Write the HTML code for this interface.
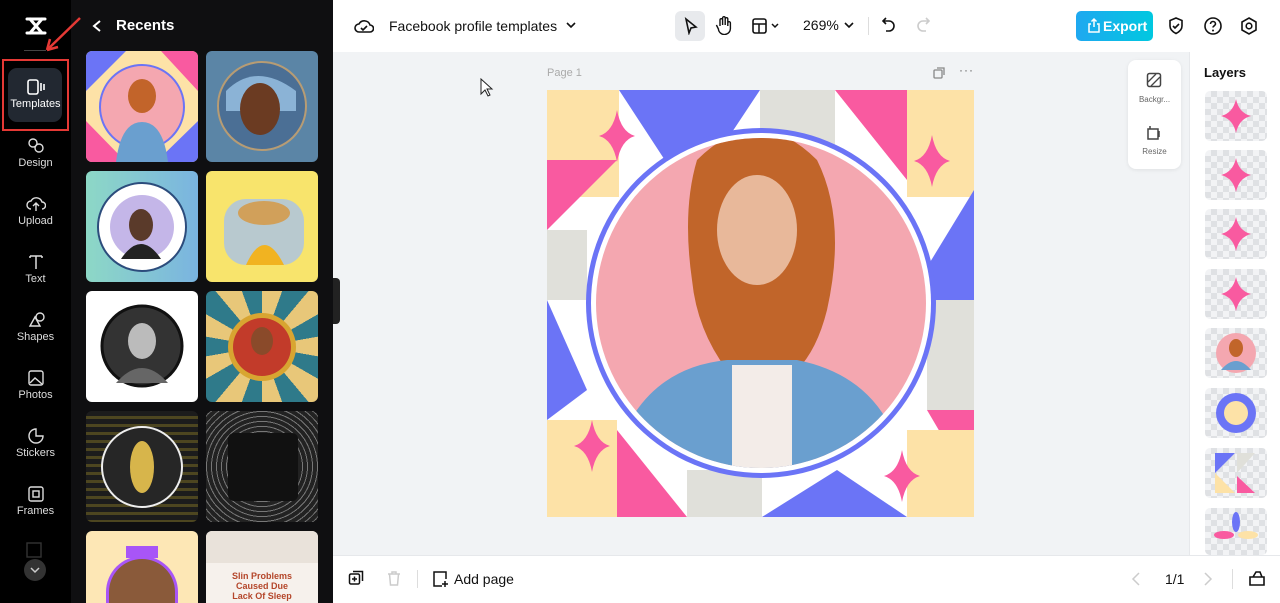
<!DOCTYPE html>
<html><head><meta charset="utf-8"><style>
*{margin:0;padding:0;box-sizing:border-box}
html,body{width:1280px;height:603px;overflow:hidden}
body{font-family:"Liberation Sans",sans-serif;background:#f1f3f5;position:relative}
.rail{position:absolute;left:0;top:0;width:71px;height:603px;background:#000}
.panel{position:absolute;left:71px;top:0;width:262px;height:603px;background:#0f0f11;overflow:hidden}
.ri{position:absolute;left:0;width:71px;text-align:center;color:#ddd;font-size:11px}
.ri svg{display:block;margin:0 auto 3px}
.th{position:absolute;width:112px;height:111px;border-radius:6px;overflow:hidden}
.top{position:absolute;left:333px;top:0;right:0;height:52px;background:#fff}
.bot{position:absolute;left:333px;top:555px;right:0;height:48px;background:#fff;border-top:1px solid #e6e8eb}
.layers{position:absolute;left:1189px;top:52px;width:91px;height:503px;background:#fff;border-left:1px solid #e6e8eb;overflow:hidden}
.lt{position:absolute;left:15px;width:62px;height:50px;border-radius:5px;background:#eceef1 repeating-conic-gradient(#dfe1e4 0 25%,#f2f3f5 0 50%) 0 0/12px 12px;overflow:hidden}
</style></head><body>
<div class="rail">
 <svg style="position:absolute;left:24px;top:15px" width="24" height="22" viewBox="0 0 24 22"><path d="M3 4h18M3 18h18M6 4l12 14M18 4L6 18" stroke="#fff" stroke-width="3" fill="none" stroke-linecap="round"/></svg>
 <div style="position:absolute;left:24px;top:50px;width:22px;height:1px;background:#444"></div>
 <div style="position:absolute;left:2px;top:59px;width:67px;height:72px;border:2px solid #e53935"></div>
 <div style="position:absolute;left:8px;top:68px;width:54px;height:54px;border-radius:9px;background:#222831"></div>
 <div class="ri" style="top:79px;color:#fff"><svg width="18" height="16" viewBox="0 0 18 16"><rect x="1" y="1" width="10" height="14" rx="2" stroke="#fff" stroke-width="1.6" fill="none"/><path d="M14 4v8M17 5v6" stroke="#fff" stroke-width="1.6"/></svg>Templates</div>
 <div class="ri" style="top:137px"><svg width="18" height="17"><circle cx="6" cy="6" r="4" stroke="#ddd" stroke-width="1.4" fill="none"/><circle cx="12" cy="11" r="4" stroke="#ddd" stroke-width="1.4" fill="none"/></svg>Design</div>
 <div class="ri" style="top:195px"><svg width="20" height="17"><path d="M5 14a4 4 0 010-8 6 6 0 0111 1 3.5 3.5 0 010 7M10 16V8M7 11l3-3 3 3" stroke="#ddd" stroke-width="1.4" fill="none"/></svg>Upload</div>
 <div class="ri" style="top:253px"><svg width="18" height="17"><path d="M3 3h12M9 3v13M3 3v2M15 3v2" stroke="#ddd" stroke-width="1.5" fill="none"/></svg>Text</div>
 <div class="ri" style="top:311px"><svg width="18" height="17"><path d="M3 15l5-9 5 9zM9 6a4 4 0 118 0 4 4 0 01-8 0" stroke="#ddd" stroke-width="1.4" fill="none"/></svg>Shapes</div>
 <div class="ri" style="top:369px"><svg width="18" height="17"><rect x="2" y="2" width="14" height="14" rx="2" stroke="#ddd" stroke-width="1.4" fill="none"/><path d="M3 14l5-5 7 6" stroke="#ddd" stroke-width="1.4" fill="none"/></svg>Photos</div>
 <div class="ri" style="top:427px"><svg width="18" height="17"><path d="M9 2a7 7 0 107 7H9z" stroke="#ddd" stroke-width="1.4" fill="none"/></svg>Stickers</div>
 <div class="ri" style="top:485px"><svg width="18" height="17"><rect x="2" y="2" width="14" height="14" rx="2" stroke="#ddd" stroke-width="1.4" fill="none"/><rect x="6" y="6" width="6" height="6" stroke="#ddd" stroke-width="1.4" fill="none"/></svg>Frames</div>
 <svg style="position:absolute;left:25px;top:541px" width="20" height="18"><rect x="2" y="2" width="14" height="14" stroke="#333" stroke-width="1.4" fill="none"/></svg>
 <div style="position:absolute;left:24px;top:559px;width:22px;height:22px;border-radius:50%;background:#333"><svg width="22" height="22"><path d="M7 9l4 4 4-4" stroke="#ccc" stroke-width="1.5" fill="none"/></svg></div>
</div>
<div class="panel">
 <svg style="position:absolute;left:20px;top:19px" width="12" height="14"><path d="M9 2L3 7l6 5" stroke="#fff" stroke-width="2" fill="none"/></svg>
 <div style="position:absolute;left:45px;top:17px;color:#fff;font-weight:bold;font-size:15px">Recents</div>
 <div class="th" style="left:15px;top:51px;background:#fde2a7"><svg width="112" height="111"><polygon points="0,0 40,0 0,40" fill="#6b74f6"/><polygon points="112,111 70,111 112,70" fill="#6b74f6"/><polygon points="0,70 0,111 40,111" fill="#f95aa0"/><polygon points="112,0 112,40 75,0" fill="#f95aa0"/><circle cx="56" cy="56" r="42" fill="#f4a7b0" stroke="#6b74f6" stroke-width="2"/><ellipse cx="56" cy="45" rx="14" ry="17" fill="#c2642a"/><path d="M30 111q5-40 26-40t26 40z" fill="#6a9fcf"/></svg></div>
 <div class="th" style="left:135px;top:51px;background:#5b85a6"><svg width="112" height="111"><circle cx="56" cy="55" r="44" fill="#4b6f95" stroke="#b79c74" stroke-width="2"/><path d="M20 40q30-30 70 0v20H20z" fill="#8bb3d6"/><ellipse cx="54" cy="58" rx="20" ry="26" fill="#6b3b22"/></svg></div>
 <div class="th" style="left:15px;top:171px;background:linear-gradient(90deg,#8dd8c6,#7ab4e0)"><svg width="112" height="111"><circle cx="56" cy="56" r="44" fill="#fff" stroke="#2c4c7c" stroke-width="2"/><circle cx="56" cy="56" r="32" fill="#c4b6e8"/><ellipse cx="55" cy="54" rx="12" ry="16" fill="#5a3a2a"/><path d="M35 88q20-30 40 0z" fill="#222"/></svg></div>
 <div class="th" style="left:135px;top:171px;background:#f8e46c"><svg width="112" height="111"><rect x="18" y="28" width="80" height="66" rx="22" fill="#b8c9cf"/><ellipse cx="58" cy="42" rx="26" ry="12" fill="#d1a05a"/><path d="M40 94q18-40 38 0z" fill="#f1b321"/></svg></div>
 <div class="th" style="left:15px;top:291px;background:#fff"><svg width="112" height="111"><circle cx="56" cy="55" r="40" fill="#333" stroke="#111" stroke-width="3"/><ellipse cx="56" cy="50" rx="14" ry="18" fill="#bbb"/><path d="M30 92q26-30 52 0z" fill="#666"/></svg></div>
 <div class="th" style="left:135px;top:291px;background:repeating-conic-gradient(from 0deg at 50% 50%,#e8c779 0 20deg,#2f7a8a 20deg 40deg)"><svg width="112" height="111"><circle cx="56" cy="56" r="34" fill="#d8a531"/><circle cx="56" cy="56" r="29" fill="#c23b2a"/><ellipse cx="56" cy="50" rx="11" ry="14" fill="#8a4a2a"/></svg></div>
 <div class="th" style="left:15px;top:411px;background:repeating-linear-gradient(180deg,#1c1c1c 0 5px,#4d4620 5px 8px)"><svg width="112" height="111"><circle cx="56" cy="56" r="40" fill="#262626" stroke="#eee" stroke-width="2"/><ellipse cx="56" cy="56" rx="12" ry="26" fill="#d7b54b"/></svg></div>
 <div class="th" style="left:135px;top:411px;background:repeating-radial-gradient(#777 0 1px,#222 1px 5px)"><div style="position:absolute;left:22px;top:22px;width:70px;height:68px;background:#111;border-radius:6px"></div></div>
 <div class="th" style="left:15px;top:531px;height:72px;border-radius:6px 6px 0 0;background:#fde7b5"><div style="position:absolute;left:20px;top:25px;width:72px;height:47px;border-radius:36px 36px 0 0;border:3px solid #a855f7;border-bottom:none;background:#8a5a3a"></div><div style="position:absolute;left:40px;top:15px;width:32px;height:12px;background:#a855f7"></div></div>
 <div class="th" style="left:135px;top:531px;height:72px;border-radius:6px 6px 0 0;background:#f6f1ec"><div style="position:absolute;left:0;top:0;width:112px;height:32px;background:#e9e2da"></div><div style="position:absolute;left:0;top:40px;width:112px;text-align:center;color:#b4462a;font-size:9px;font-weight:bold;line-height:10px">Slin Problems<br>Caused Due<br>Lack Of Sleep</div></div>
</div>
<svg style="position:absolute;left:25px;top:12px;z-index:5" width="60" height="50"><path d="M55 6L22 38M22 38l3-11M22 38l11-3" stroke="#e53935" stroke-width="2.5" fill="none"/></svg>
<div style="position:absolute;left:333px;top:278px;width:7px;height:46px;background:#222;border-radius:0 4px 4px 0"></div>
<div class="top">
 <svg style="position:absolute;left:21px;top:17px" width="20" height="18"><path d="M5 15a4 4 0 010-8 6 6 0 0111 1 3.5 3.5 0 010 7z M7 11l2 2 4-4" stroke="#111" stroke-width="1.6" fill="none"/></svg>
 <div style="position:absolute;left:56px;top:18px;font-size:14px;color:#111">Facebook profile templates</div>
 <svg style="position:absolute;left:232px;top:20px" width="12" height="10"><path d="M2 3l4 4 4-4" stroke="#111" stroke-width="1.6" fill="none"/></svg>
 <div style="position:absolute;left:342px;top:11px;width:30px;height:30px;border-radius:6px;background:#e8eaed"></div>
 <svg style="position:absolute;left:350px;top:17px" width="16" height="18"><path d="M3 2l10 8-5 1-2 5z" stroke="#111" stroke-width="1.6" fill="none"/></svg>
 <svg style="position:absolute;left:382px;top:15px" width="18" height="20"><path d="M5 11V5a1.3 1.3 0 012.6 0v5V3a1.3 1.3 0 012.6 0v7V4a1.3 1.3 0 012.6 0v7-3a1.3 1.3 0 012.6 0v5a6 6 0 01-12 1l-2-4" stroke="#111" stroke-width="1.4" fill="none"/></svg>
 <svg style="position:absolute;left:418px;top:17px" width="32" height="18"><rect x="2" y="2" width="13" height="14" rx="2" stroke="#111" stroke-width="1.6" fill="none"/><path d="M2 7h13M8 7v9M21 7l3 3 3-3" stroke="#111" stroke-width="1.5" fill="none"/></svg>
 <div style="position:absolute;left:470px;top:17px;font-size:14px;color:#111">269%</div>
 <svg style="position:absolute;left:510px;top:20px" width="12" height="10"><path d="M2 3l4 4 4-4" stroke="#111" stroke-width="1.6" fill="none"/></svg>
 <div style="position:absolute;left:535px;top:17px;width:1px;height:18px;background:#ddd"></div>
 <svg style="position:absolute;left:548px;top:16px" width="16" height="20"><path d="M5 2L2 5l3 3M2 5h6a5 5 0 010 10H5" stroke="#111" stroke-width="1.6" fill="none"/></svg>
 <svg style="position:absolute;left:582px;top:16px" width="16" height="20"><path d="M11 2l3 3-3 3M14 5H8a5 5 0 000 10h3" stroke="#ccc" stroke-width="1.6" fill="none"/></svg>
 <div style="position:absolute;left:743px;top:11px;width:77px;height:30px;border-radius:5px;background:linear-gradient(90deg,#1fa8f0,#00c8e0);color:#fff;font-size:14px;font-weight:bold;line-height:30px;padding-left:27px">Export</div>
 <svg style="position:absolute;left:754px;top:17px" width="14" height="16"><path d="M4 7H2v8h10V7h-2M7 10V2M4.5 4.5L7 2l2.5 2.5" stroke="#fff" stroke-width="1.5" fill="none"/></svg>
 <svg style="position:absolute;left:834px;top:16px" width="18" height="20"><path d="M9 2l6 2.5V10c0 4-3 6-6 7.5C6 16 3 14 3 10V4.5z M6 10l2 2 4-4" stroke="#111" stroke-width="1.6" fill="none"/></svg>
 <svg style="position:absolute;left:870px;top:16px" width="20" height="20"><circle cx="10" cy="10" r="8" stroke="#111" stroke-width="1.6" fill="none"/><path d="M7.5 8a2.5 2.5 0 115 0c0 1.5-2.5 2-2.5 3.5" stroke="#111" stroke-width="1.6" fill="none"/><circle cx="10" cy="14.5" r="1" fill="#111"/></svg>
 <svg style="position:absolute;left:906px;top:16px" width="20" height="20"><path d="M10 2l7 4v8l-7 4-7-4V6z" stroke="#111" stroke-width="1.6" fill="none"/><circle cx="10" cy="10" r="2.8" stroke="#111" stroke-width="1.6" fill="none"/></svg>
</div>
<div style="position:absolute;left:547px;top:67px;font-size:11px;color:#aaa">Page 1</div>
<svg style="position:absolute;left:932px;top:66px" width="14" height="14"><rect x="2" y="4" width="8" height="8" rx="1" stroke="#888" stroke-width="1.3" fill="none"/><path d="M5 2h7v7" stroke="#888" stroke-width="1.3" fill="none"/></svg>
<div style="position:absolute;left:959px;top:63px;font-size:12px;color:#666;letter-spacing:1px">···</div>
<svg style="position:absolute;left:480px;top:78px" width="14" height="20"><path d="M1 1v15l4-4 3 6 2-1-3-6h5z" fill="#fff" stroke="#222" stroke-width="1"/></svg>
<svg style="position:absolute;left:547px;top:90px" width="427" height="427" viewBox="0 0 427 427">
 <rect width="427" height="427" fill="#fff"/>
 <rect x="0" y="0" width="72" height="107" fill="#fde2a7"/>
 <polygon points="72,0 213,0 142,107" fill="#6b74f6"/>
 <rect x="213" y="0" width="75" height="60" fill="#e0e0da"/>
 <polygon points="288,0 360,0 360,90" fill="#f95aa0"/>
 <rect x="360" y="0" width="67" height="107" fill="#fde2a7"/>
 <polygon points="0,70 70,70 0,140" fill="#f95aa0"/>
 <polygon points="427,100 427,210 360,210" fill="#6b74f6"/>
 <rect x="0" y="140" width="40" height="70" fill="#e0e0da"/>
 <polygon points="0,210 40,300 0,330" fill="#6b74f6"/>
 <rect x="380" y="210" width="47" height="110" fill="#e0e0da"/>
 <polygon points="380,320 427,320 427,400" fill="#f95aa0"/>
 <rect x="0" y="330" width="70" height="97" fill="#fde2a7"/>
 <polygon points="70,340 140,427 70,427" fill="#f95aa0"/>
 <rect x="140" y="380" width="75" height="47" fill="#e0e0da"/>
 <polygon points="215,427 290,380 360,427" fill="#6b74f6"/>
 <rect x="360" y="340" width="67" height="87" fill="#fde2a7"/>
 <path d="M70 20q4 22 18 26q-14 4-18 26q-4-22-18-26q14-4 18-26z" fill="#f95aa0"/>
 <path d="M385 45q4 22 18 26q-14 4-18 26q-4-22-18-26q14-4 18-26z" fill="#f95aa0"/>
 <path d="M45 330q4 22 18 26q-14 4-18 26q-4-22-18-26q14-4 18-26z" fill="#f95aa0"/>
 <path d="M355 360q4 22 18 26q-14 4-18 26q-4-22-18-26q14-4 18-26z" fill="#f95aa0"/>
 <circle cx="214" cy="213" r="175" fill="#6b74f6"/>
 <circle cx="214" cy="213" r="170" fill="#fff"/>
 <circle cx="214" cy="213" r="165" fill="#f4a7b0"/>
 <clipPath id="c"><circle cx="214" cy="213" r="165"/></clipPath>
 <g clip-path="url(#c)">
  <path d="M150 70q60-60 120 0q30 60 10 150q-10 40-30 60h-70q-30-40-35-90q-10-70 5-120z" fill="#c1652a"/>
  <ellipse cx="210" cy="140" rx="40" ry="55" fill="#e8b89a"/>
  <path d="M60 400q20-120 120-130h70q100 20 110 130z" fill="#6a9fcf"/>
  <path d="M185 275h60v120h-60z" fill="#f3ece8"/>
 </g>
</svg>
<div style="position:absolute;left:1128px;top:60px;width:53px;height:109px;background:#fff;border-radius:8px;box-shadow:0 1px 4px rgba(0,0,0,.08)"></div>
<svg style="position:absolute;left:1146px;top:72px" width="16" height="16"><rect x="1.5" y="1.5" width="13" height="13" rx="2" stroke="#444" stroke-width="1.5" fill="none"/><path d="M2 10l8-8M5 14l9-9" stroke="#444" stroke-width="1.3"/></svg>
<div style="position:absolute;left:1128px;top:95px;width:53px;text-align:center;font-size:8px;color:#666">Backgr...</div>
<svg style="position:absolute;left:1146px;top:125px" width="16" height="16"><path d="M2 4h10v10H2zM4 1v3M13 6v6" stroke="#444" stroke-width="1.5" fill="none"/></svg>
<div style="position:absolute;left:1128px;top:147px;width:53px;text-align:center;font-size:8px;color:#666">Resize</div>
<div class="layers">
 <div style="position:absolute;left:14px;top:13px;font-size:13px;font-weight:bold;color:#111">Layers</div>
 <div class="lt" style="top:39px"><svg width="62" height="50"><path d="M31 8q3 14 15 17q-12 3-15 17q-3-14-15-17q12-3 15-17z" fill="#f95aa0"/></svg></div>
 <div class="lt" style="top:98px"><svg width="62" height="50"><path d="M31 8q3 14 15 17q-12 3-15 17q-3-14-15-17q12-3 15-17z" fill="#f95aa0"/></svg></div>
 <div class="lt" style="top:157px"><svg width="62" height="50"><path d="M31 8q3 14 15 17q-12 3-15 17q-3-14-15-17q12-3 15-17z" fill="#f95aa0"/></svg></div>
 <div class="lt" style="top:217px"><svg width="62" height="50"><path d="M31 8q3 14 15 17q-12 3-15 17q-3-14-15-17q12-3 15-17z" fill="#f95aa0"/></svg></div>
 <div class="lt" style="top:276px"><svg width="62" height="50"><circle cx="31" cy="25" r="20" fill="#f4a7b0"/><ellipse cx="31" cy="20" rx="7" ry="9" fill="#c1652a"/><path d="M16 42q15-18 30 0z" fill="#6a9fcf"/></svg></div>
 <div class="lt" style="top:336px"><svg width="62" height="50"><circle cx="31" cy="25" r="20" fill="#6b74f6"/><circle cx="31" cy="25" r="12" fill="#fde2a7"/></svg></div>
 <div class="lt" style="top:396px"><svg width="62" height="50"><polygon points="10,5 30,5 10,25" fill="#6b74f6"/><polygon points="10,25 30,45 10,45" fill="#fde2a7"/><polygon points="32,28 50,45 32,45" fill="#f95aa0"/><polygon points="32,5 50,5 32,25" fill="#e0e0da"/></svg></div>
 <div class="lt" style="top:456px;height:47px"><svg width="62" height="47"><ellipse cx="31" cy="14" rx="4" ry="10" fill="#6b74f6"/><ellipse cx="19" cy="27" rx="10" ry="4" fill="#f95aa0"/><ellipse cx="43" cy="27" rx="10" ry="4" fill="#fde2a7"/></svg></div>
</div>
<div class="bot">
 <svg style="position:absolute;left:15px;top:14px" width="16" height="16"><rect x="1.5" y="4" width="10" height="10" rx="1.5" stroke="#111" stroke-width="1.5" fill="none"/><path d="M5 1.5h9.5V11M6.5 6.5v5M4 9h5" stroke="#111" stroke-width="1.5" fill="none"/></svg>
 <svg style="position:absolute;left:53px;top:14px" width="16" height="16"><path d="M2 4h12M6 4V2h4v2M3.5 4l1 11h7l1-11" stroke="#ccc" stroke-width="1.5" fill="none"/></svg>
 <div style="position:absolute;left:84px;top:14px;width:1px;height:18px;background:#ddd"></div>
 <svg style="position:absolute;left:99px;top:14px" width="18" height="18"><path d="M14 9V2H2v14h8M13 11v6M10 14h6" stroke="#111" stroke-width="1.5" fill="none"/></svg>
 <div style="position:absolute;left:121px;top:15px;font-size:14px;color:#111">Add page</div>
 <svg style="position:absolute;left:798px;top:15px" width="10" height="16"><path d="M8 2L2 8l6 6" stroke="#ccc" stroke-width="1.5" fill="none"/></svg>
 <div style="position:absolute;left:832px;top:15px;font-size:14px;color:#111">1/1</div>
 <svg style="position:absolute;left:870px;top:15px" width="10" height="16"><path d="M2 2l6 6-6 6" stroke="#ccc" stroke-width="1.5" fill="none"/></svg>
 <div style="position:absolute;left:899px;top:13px;width:1px;height:20px;background:#ddd"></div>
 <svg style="position:absolute;left:915px;top:13px" width="18" height="18"><path d="M2 8h14v8H2zM5 8l3-5h4l2 5" stroke="#111" stroke-width="1.6" fill="none"/></svg>
</div>
</body></html>
